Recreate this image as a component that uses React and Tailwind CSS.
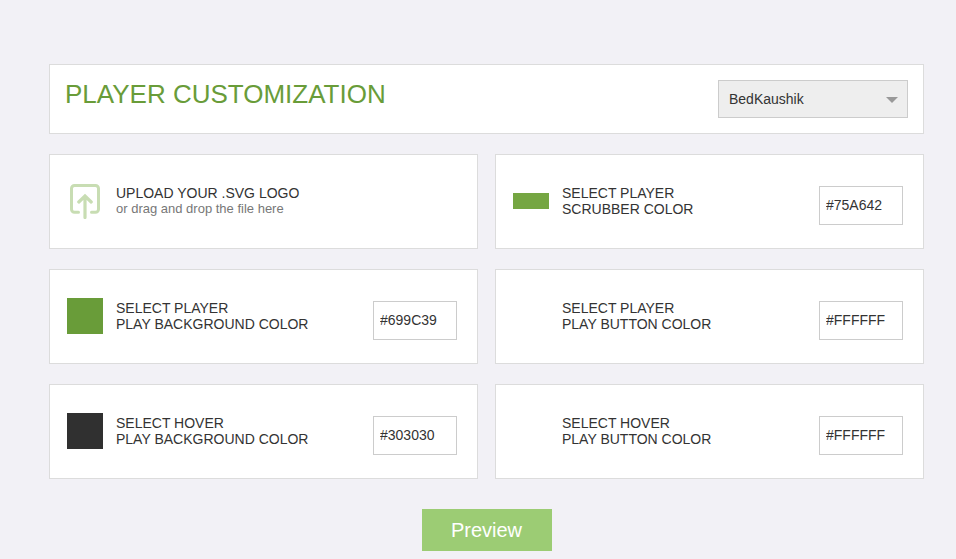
import React, { useState } from "react";

const fields = [
  { id: "scrubber", lines: ["SELECT PLAYER", "SCRUBBER COLOR"], value: "#75A642", shape: "h-4" },
  { id: "play-bg", lines: ["SELECT PLAYER", "PLAY BACKGROUND COLOR"], value: "#699C39", shape: "h-9" },
  { id: "play-btn", lines: ["SELECT PLAYER", "PLAY BUTTON COLOR"], value: "#FFFFFF", shape: "h-9" },
  { id: "hover-bg", lines: ["SELECT HOVER", "PLAY BACKGROUND COLOR"], value: "#303030", shape: "h-9" },
  { id: "hover-btn", lines: ["SELECT HOVER", "PLAY BUTTON COLOR"], value: "#FFFFFF", shape: "h-9" },
];

function UploadIcon() {
  return (
    <svg className="w-9 h-9" viewBox="0 0 36 36" fill="none" stroke="#c8ddb3" strokeLinecap="round" aria-hidden="true">
      <path
        d="M11.5 29.2H7.500A3 3 0 0 1 4.500 26.200V5.500A3 3 0 0 1 7.500 2.500H28.500A3 3 0 0 1 31.500 5.500V26.200A3 3 0 0 1 28.500 29.200H24.500"
        strokeWidth="3"
      />
      <path d="M18 34.500V13.500M11.800 19L18 13L24.200 19" strokeWidth="3.200" />
    </svg>
  );
}

function UploadCard() {
  return (
    <label className="flex items-start bg-white border border-[#dcdcdc] pl-[17px] pt-7 cursor-pointer">
      <input type="file" accept=".svg" className="sr-only" />
      <span className="flex items-center gap-[13px]">
        <UploadIcon />
        <span>
          <span className="block text-sm leading-4">UPLOAD YOUR .SVG LOGO</span>
          <span className="block text-[13px] leading-4 text-[#777777]">or drag and drop the file here</span>
        </span>
      </span>
    </label>
  );
}

function ColorCard({ field }) {
  const [color, setColor] = useState(field.value);

  return (
    <div className="flex items-start justify-between bg-white border border-[#dcdcdc] pl-[17px] pr-5 pt-7 pb-[23px]">
      <label htmlFor={field.id} className="flex items-center gap-[13px] h-9">
        <span className={`w-9 ${field.shape}`} style={{ backgroundColor: color }} />
        <span className="text-sm leading-4">
          {field.lines[0]}
          <br />
          {field.lines[1]}
        </span>
      </label>
      <input
        id={field.id}
        type="text"
        value={color}
        onChange={(e) => setColor(e.target.value)}
        className="mt-[3px] w-[84px] h-[39px] px-1.5 pb-0.5 border border-[#cccccc] bg-white text-sm outline-none"
      />
    </div>
  );
}

export default function App() {
  return (
    <div className="min-h-screen bg-[#f2f1f6] pl-[49px] pr-8 pt-16 pb-2 font-['Liberation_Sans',Arial,sans-serif] text-[#333333]">
      <header className="flex items-start justify-between bg-white border border-[#dcdcdc] p-[15px]">
        <h1 className="text-[26px] leading-7 text-[#699c39]">PLAYER CUSTOMIZATION</h1>
        <div className="relative">
          <select
            aria-label="Player"
            className="appearance-none w-[190px] h-[38px] pl-2.5 pr-8 border border-[#cccccc] bg-[#eeeeee] text-sm outline-none"
          >
            <option>BedKaushik</option>
          </select>
          <span className="absolute right-[10px] top-[17px] border-x-6 border-t-6 border-x-transparent border-t-[#999999] pointer-events-none" />
        </div>
      </header>

      <main className="grid grid-cols-2 gap-x-[17px] gap-y-5 mt-5">
        <UploadCard />
        {fields.map((field) => (
          <ColorCard key={field.id} field={field} />
        ))}
      </main>

      <div className="flex justify-center mt-[30px]">
        <button type="button" className="w-[130px] h-[42px] bg-[#9ccc74] text-white text-xl">
          Preview
        </button>
      </div>
    </div>
  );
}
